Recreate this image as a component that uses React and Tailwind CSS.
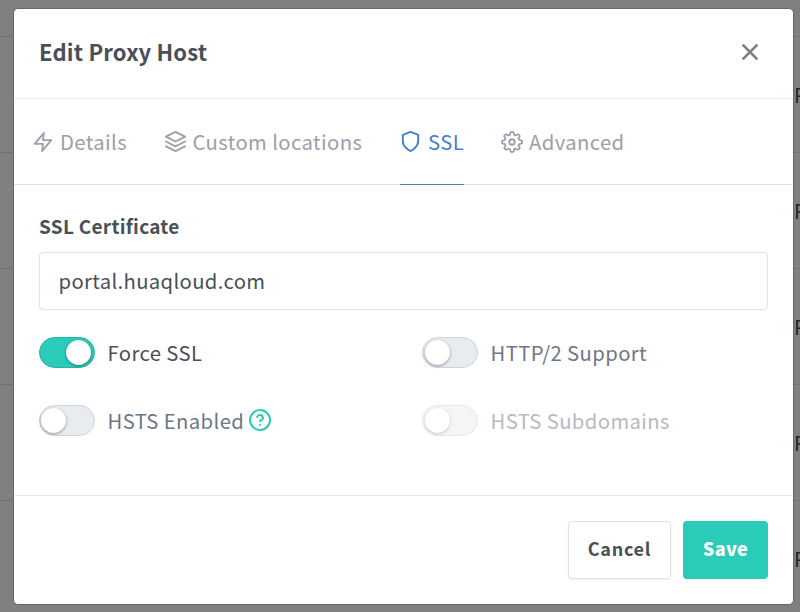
import React from "react";

const iconProps = {
  viewBox: "0 0 24 24",
  fill: "none",
  stroke: "currentColor",
  strokeWidth: 2,
  strokeLinecap: "round",
  strokeLinejoin: "round",
};

function ZapIcon() {
  return (
    <svg {...iconProps} className="mt-px -ml-px size-[22px] shrink-0">
      <polygon points="13 2 3 14 12 14 11 22 21 10 12 10 13 2" />
    </svg>
  );
}

function LayersIcon() {
  return (
    <svg {...iconProps} className="mt-px size-[23px] shrink-0">
      <polygon points="12 2 2 7 12 12 22 7 12 2" />
      <polyline points="2 17 12 22 22 17" />
      <polyline points="2 12 12 17 22 12" />
    </svg>
  );
}

function ShieldIcon() {
  return (
    <svg {...iconProps} className="mt-px -ml-px size-[23px] shrink-0">
      <path d="M12 22s8-4 8-10V5l-8-3-8 3v7c0 6 8 10 8 10z" />
    </svg>
  );
}

function GearIcon() {
  return (
    <svg {...iconProps} className="mt-px size-[22px] shrink-0">
      <circle cx="12" cy="12" r="3" />
      <path d="M19.4 15a1.65 1.65 0 0 0 .33 1.82l.06.06a2 2 0 0 1 0 2.83 2 2 0 0 1-2.83 0l-.06-.06a1.65 1.65 0 0 0-1.82-.33 1.65 1.65 0 0 0-1 1.51V21a2 2 0 0 1-2 2 2 2 0 0 1-2-2v-.09A1.65 1.65 0 0 0 9 19.4a1.65 1.65 0 0 0-1.82.33l-.06.06a2 2 0 0 1-2.83 0 2 2 0 0 1 0-2.83l.06-.06a1.65 1.65 0 0 0 .33-1.82 1.65 1.65 0 0 0-1.51-1H3a2 2 0 0 1-2-2 2 2 0 0 1 2-2h.09A1.65 1.65 0 0 0 4.6 9a1.65 1.65 0 0 0-.33-1.82l-.06-.06a2 2 0 0 1 0-2.83 2 2 0 0 1 2.83 0l.06.06a1.65 1.65 0 0 0 1.82.33H9a1.65 1.65 0 0 0 1-1.51V3a2 2 0 0 1 2-2 2 2 0 0 1 2 2v.09a1.65 1.65 0 0 0 1 1.51 1.65 1.65 0 0 0 1.82-.33l.06-.06a2 2 0 0 1 2.83 0 2 2 0 0 1 0 2.83l-.06.06a1.65 1.65 0 0 0-.33 1.82V9a1.65 1.65 0 0 0 1.51 1H21a2 2 0 0 1 2 2 2 2 0 0 1-2 2h-.09a1.65 1.65 0 0 0-1.51 1z" />
    </svg>
  );
}

function HelpIcon() {
  return (
    <svg {...iconProps} className="ml-[4px] -mt-px size-[24px] shrink-0 text-[#2bcbba]">
      <circle cx="12" cy="12" r="10" />
      <path d="M9.09 9a3 3 0 0 1 5.83 1c0 2-3 3-3 3" />
      <line x1="12" y1="17" x2="12.01" y2="17" />
    </svg>
  );
}

function CloseIcon() {
  return (
    <svg {...iconProps} strokeWidth={2.3} strokeLinecap="butt" className="-mt-[3px] size-[28px]">
      <path d="M18.3 5.7 5.7 18.3M5.7 5.7l12.6 12.6" />
    </svg>
  );
}

function Tab({ icon, label, active, className }) {
  return (
    <button
      className={`flex h-[86px] items-center border-b pb-px ${
        active ? "border-[#467fcf] text-[#467fcf]" : "border-transparent text-[#9aa0ac]"
      } ${className}`}
    >
      {icon}
      <span className="pt-[2px]">{label}</span>
    </button>
  );
}

function Toggle({ on, disabled, label, inset = "pl-[2px]", children }) {
  return (
    <label className={`flex h-8 items-center ${disabled ? "opacity-50" : ""}`}>
      <span
        className={`flex h-[31px] w-14 items-start rounded-full border ${
          on ? "justify-end border-[#25b3a4] bg-[#2bcbba] p-[2px] pr-[3px]" : `border-[#cdd3df] bg-[#e9ecef] py-[2px] ${inset}`
        }`}
      >
        <span className="size-[25px] rounded-full bg-white shadow-[0_1px_3px_rgba(0,0,0,0.4)]" />
      </span>
      <span className={`ml-[12.5px] pt-[2px] ${on ? "text-[#495057]" : "text-[#6e7687]"}`}>{label}</span>
      {children}
    </label>
  );
}

function BackgroundRow() {
  return (
    <div className="flex h-[116px] items-center justify-end border-b border-[#707070] text-[20px] text-[#212529]">
      <span className="w-[6px] overflow-hidden whitespace-nowrap">P</span>
    </div>
  );
}

export default function App() {
  return (
    <div className="relative h-[612px] w-[800px] overflow-hidden bg-[#808080] font-['Noto_Sans_CJK_SC','Noto_Sans',sans-serif] text-[20.25px] leading-[30px] tracking-[0.4px]">
      <div className="h-[37px] border-b border-[#707070]" />
      <BackgroundRow />
      <BackgroundRow />
      <BackgroundRow />
      <BackgroundRow />
      <BackgroundRow />

      <div className="absolute left-[13px] top-[8px] flex h-[597px] w-[781px] flex-col rounded-[5px] border border-[#666] bg-white">
        <header className="flex h-[90px] items-center justify-between border-b border-[#e9ecef] pl-[25px] pr-[29px]">
          <h1 className="pb-[5px] text-[22px] font-bold tracking-[0.2px] text-[#495057]">Edit Proxy Host</h1>
          <button className="text-[#7f7f7f]">
            <CloseIcon />
          </button>
        </header>

        <nav className="flex h-[86px] border-b border-[#dee2e6] pl-[19px]">
          <Tab icon={<ZapIcon />} label="Details" className="w-[94px] gap-[6px]" />
          <Tab icon={<LayersIcon />} label="Custom locations" className="ml-[37px] w-[199px] gap-[5.5px] whitespace-nowrap" />
          <Tab icon={<ShieldIcon />} label="SSL" active className="ml-[37px] w-[64px] gap-[6px]" />
          <Tab icon={<GearIcon />} label="Advanced" className="ml-[37px] gap-[6px]" />
        </nav>

        <main className="flex-1 px-[25px] pt-[26px]">
          <div className="text-[19px] font-bold tracking-[0.28px] text-[#495057]">SSL Certificate</div>
          <div className="mt-[11px] flex h-[58px] items-center rounded-[4px] border border-[#dfe2ea] pl-[18.5px] tracking-[0.35px] text-[#495057]">
            portal.huaqloud.com
          </div>
          <div className="mt-[26px] grid grid-cols-[383px_1fr] gap-y-9">
            <Toggle on label="Force SSL" />
            <Toggle label="HTTP/2 Support" />
            <Toggle label="HSTS Enabled" inset="pl-[1px]">
              <HelpIcon />
            </Toggle>
            <Toggle disabled label="HSTS Subdomains" />
          </div>
        </main>

        <footer className="flex h-[109px] items-start justify-end gap-3 border-t border-[#e9ecef] pr-[25px] pt-[25px] text-[18px] font-bold tracking-[0.7px]">
          <button className="h-[58px] w-[103px] rounded-[4px] border border-[#dfe2ea] pb-[4px] text-[#495057] shadow-[0_1px_2px_rgba(0,0,0,0.07)]">
            Cancel
          </button>
          <button className="h-[58px] w-[85px] rounded-[4px] bg-[#2bcbba] pb-[4px] font-black tracking-[0.4px] text-white">Save</button>
        </footer>
      </div>
    </div>
  );
}
